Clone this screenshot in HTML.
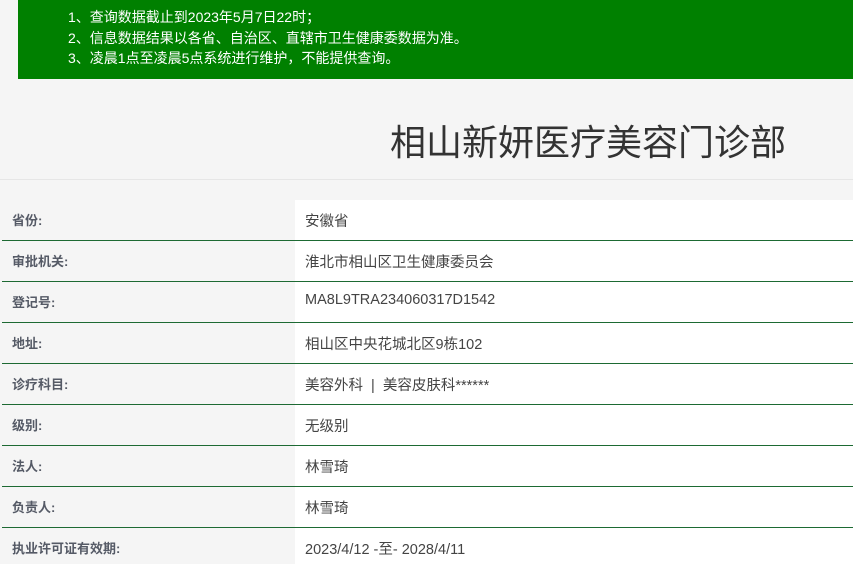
<!DOCTYPE html>
<html><head><meta charset="utf-8"><style>
*{margin:0;padding:0;box-sizing:border-box}
html,body{width:853px;height:564px;overflow:hidden}
body{background:#f5f5f5;font-family:"Liberation Sans","Noto Sans CJK SC",sans-serif;position:relative}
.notice{position:absolute;left:18px;top:0;width:835px;height:79px;background:#008000;color:#fff;font-size:14px;line-height:20.5px;padding:7px 0 0 50px}
.title{position:absolute;right:67px;top:118px;font-size:36px;color:#333;line-height:50px}
.hr{position:absolute;left:0;top:179px;width:853px;height:1px;background:#e6e6e6}
.white{position:absolute;left:295px;top:200px;width:558px;height:364px;background:#fff}
.row{position:absolute;left:0;width:853px;height:41px}
.row .l{position:absolute;left:12px;top:10px;font-size:13px;font-weight:bold;color:#555a66}
.row .v{position:absolute;left:305px;top:10px;font-size:14.5px;color:#444}
.line{position:absolute;left:2px;width:851px;height:1px;background:#1d6a33}
</style></head><body>
<div class="notice">1、查询数据截止到2023年5月7日22时；<br>2、信息数据结果以各省、自治区、直辖市卫生健康委数据为准。<br>3、凌晨1点至凌晨5点系统进行维护，不能提供查询。</div>
<div class="title">相山新妍医疗美容门诊部</div>
<div class="hr"></div>
<div class="white"></div>
<div class="row" style="top:200px"><span class="l">省份:</span><span class="v">安徽省</span></div>
<div class="line" style="top:240px"></div>
<div class="row" style="top:241px"><span class="l">审批机关:</span><span class="v">淮北市相山区卫生健康委员会</span></div>
<div class="line" style="top:281px"></div>
<div class="row" style="top:282px"><span class="l">登记号:</span><span class="v">MA8L9TRA234060317D1542</span></div>
<div class="line" style="top:322px"></div>
<div class="row" style="top:323px"><span class="l">地址:</span><span class="v">相山区中央花城北区9栋102</span></div>
<div class="line" style="top:363px"></div>
<div class="row" style="top:364px"><span class="l">诊疗科目:</span><span class="v">美容外科 &nbsp;| &nbsp;美容皮肤科******</span></div>
<div class="line" style="top:404px"></div>
<div class="row" style="top:405px"><span class="l">级别:</span><span class="v">无级别</span></div>
<div class="line" style="top:445px"></div>
<div class="row" style="top:446px"><span class="l">法人:</span><span class="v">林雪琦</span></div>
<div class="line" style="top:486px"></div>
<div class="row" style="top:487px"><span class="l">负责人:</span><span class="v">林雪琦</span></div>
<div class="line" style="top:527px"></div>
<div class="row" style="top:528px"><span class="l">执业许可证有效期:</span><span class="v">2023/4/12 -至- 2028/4/11</span></div>
</body></html>
